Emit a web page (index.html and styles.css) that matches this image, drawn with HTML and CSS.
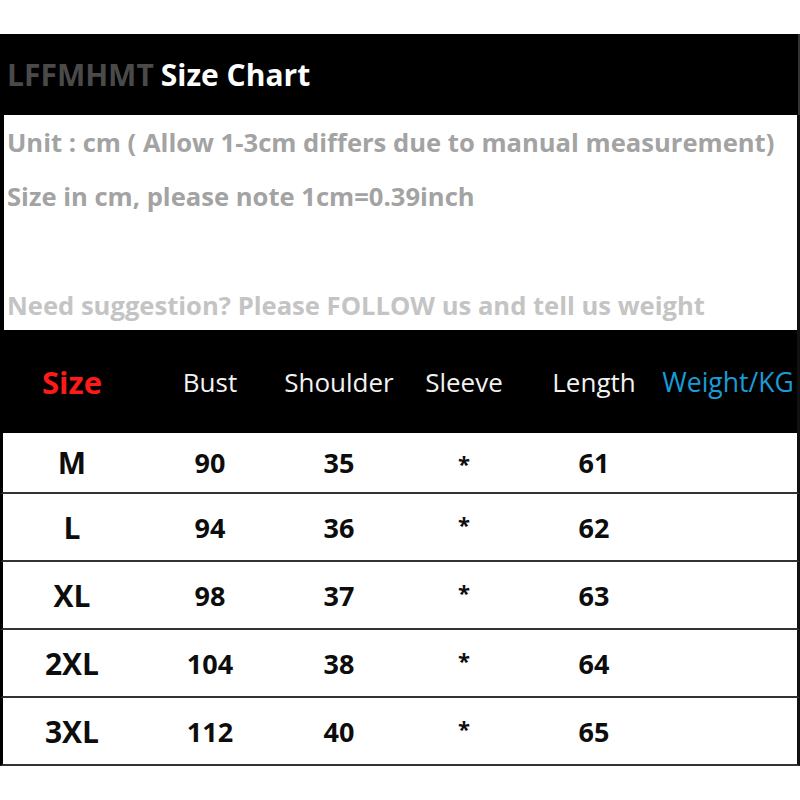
FILE: index.html
```html
<!DOCTYPE html>
<html>
<head>
<meta charset="utf-8">
<link rel="stylesheet" href="styles.css">
</head>
<body>
<div class="chart">
  <div class="title"><span class="brand">LFFMHMT</span><span class="title-text">Size Chart</span></div>
  <div class="info">
    <p class="note">Unit : cm ( Allow 1-3cm differs due to manual measurement)</p>
    <p class="note">Size in cm, please note 1cm=0.39inch</p>
    <p class="note light">Need suggestion? Please FOLLOW us and tell us weight</p>
  </div>
  <div class="row head">
    <div class="cell size-h">Size</div>
    <div class="cell">Bust</div>
    <div class="cell">Shoulder</div>
    <div class="cell">Sleeve</div>
    <div class="cell">Length</div>
    <div class="cell weight-h">Weight/KG</div>
  </div>
  <div class="row data first">
    <div class="cell sz">M</div><div class="cell">90</div><div class="cell">35</div><div class="cell star">*</div><div class="cell">61</div><div class="cell"></div>
  </div>
  <div class="row data">
    <div class="cell sz">L</div><div class="cell">94</div><div class="cell">36</div><div class="cell star">*</div><div class="cell">62</div><div class="cell"></div>
  </div>
  <div class="row data">
    <div class="cell sz">XL</div><div class="cell">98</div><div class="cell">37</div><div class="cell star">*</div><div class="cell">63</div><div class="cell"></div>
  </div>
  <div class="row data">
    <div class="cell sz">2XL</div><div class="cell">104</div><div class="cell">38</div><div class="cell star">*</div><div class="cell">64</div><div class="cell"></div>
  </div>
  <div class="row data">
    <div class="cell sz">3XL</div><div class="cell">112</div><div class="cell">40</div><div class="cell star">*</div><div class="cell">65</div><div class="cell"></div>
  </div>
</div>
</body>
</html>
```
FILE: styles.css
```css
html, body {
  margin: 0;
  padding: 0;
  background: #fff;
}
body {
  font-family: "Open Sans", Lato, sans-serif;
}
.chart {
  margin-top: 34px;
  width: 800px;
}
.title {
  height: 81px;
  background: #000;
  border-right: 2px solid #333;
  box-sizing: border-box;
  display: flex;
  align-items: center;
  gap: 7px;
  padding-left: 7px;
  font-weight: 700;
  font-size: 30px;
}
.brand {
  color: #4a4a4a;
}
.title-text {
  color: #fff;
}
.info {
  height: 215px;
  box-sizing: border-box;
  background: #fff;
  border-left: 4px solid #000;
  border-right: 3px solid #111;
  padding: 12px 0 0 3px;
  display: flex;
  flex-direction: column;
}
.note {
  margin: 0;
  flex-shrink: 0;
  font-size: 25.6px;
  font-weight: 700;
  color: #a3a3a3;
  line-height: 32px;
  height: 54px;
}
.note.light {
  height: auto;
  margin-top: 55px;
  color: #c4c4c4;
}
.row {
  display: grid;
  grid-template-columns: 138px 138px 120px 130px 130px 1fr;
  width: 800px;
  box-sizing: border-box;
  border-left: 3px solid #000;
  border-right: 3px solid #111;
}
.head {
  height: 103px;
  background: #000;
  color: #f2f2f2;
  font-size: 26px;
}
.cell {
  display: flex;
  align-items: center;
  justify-content: center;
}
.size-h {
  color: #ff1a1a;
  font-weight: 700;
  font-size: 31px;
}
.weight-h {
  color: #1a9bd7;
  font-size: 26.5px;
}
.data {
  height: 68px;
  border-bottom: 2px solid #333;
  font-weight: 700;
  font-size: 27px;
  color: #0d0d0d;
}
.data.first {
  height: 61px;
}
.sz {
  font-size: 30px;
}
.star {
  align-items: flex-start;
  padding-top: 15px;
  box-sizing: border-box;
  font-size: 22px;
}
```
